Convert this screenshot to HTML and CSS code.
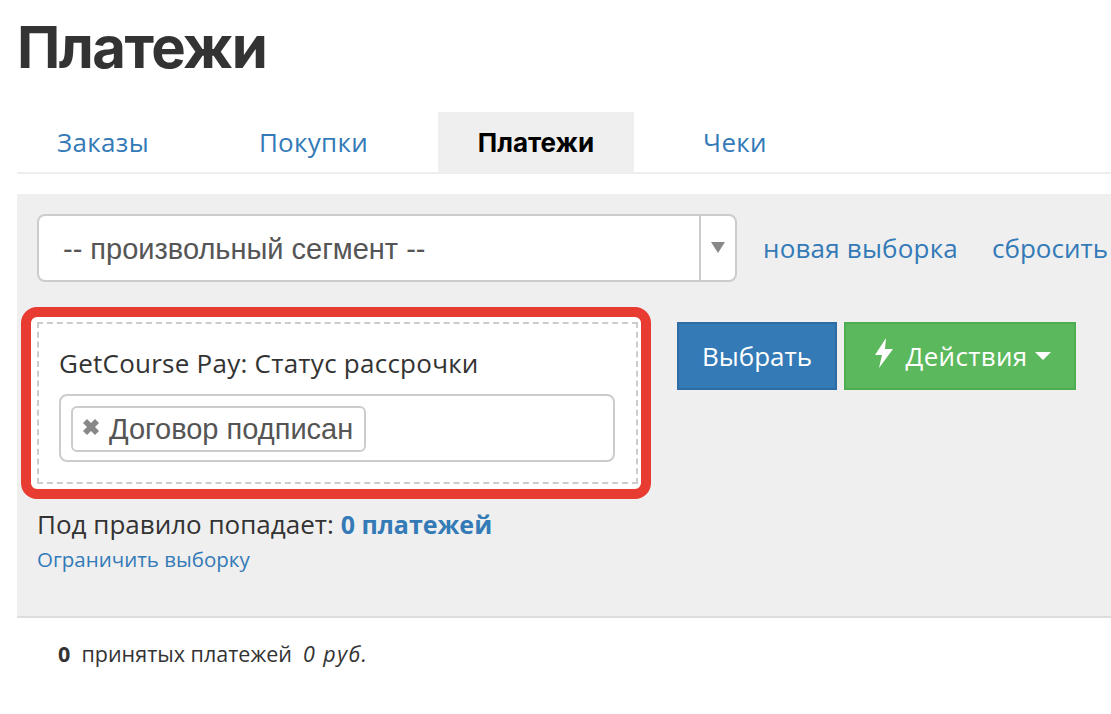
FILE: index.html
```html
<!DOCTYPE html>
<html lang="ru">
<head>
<meta charset="utf-8">
<title>Платежи</title>
<link rel="stylesheet" href="styles.css">
</head>
<body>
<main class="page">
  <h1 class="title">Платежи</h1>
  <nav class="tabs">
    <a class="tab tab-a">Заказы</a>
    <a class="tab tab-b">Покупки</a>
    <a class="tab tab-c active">Платежи</a>
    <a class="tab tab-d">Чеки</a>
  </nav>
  <section class="panel">
    <div class="segment-row">
      <div class="select">
        <span class="select-text">-- произвольный сегмент --</span>
        <span class="select-arrow"><i class="tri"></i></span>
      </div>
      <a class="link link-new">новая выборка</a>
      <a class="link link-reset">сбросить</a>
    </div>
    <div class="rule-row">
      <div class="highlight">
        <div class="rule">
          <div class="rule-label">GetCourse Pay: Статус рассрочки</div>
          <div class="tag-input">
            <span class="tag">
              <svg class="tag-x" viewBox="2 2 12 12"><path d="M2 5 5 2l3 3 3-3 3 3-3 3 3 3-3 3-3-3-3 3-3-3 3-3z"/></svg>
              Договор подписан
            </span>
          </div>
        </div>
      </div>
      <button class="btn btn-blue">Выбрать</button>
      <button class="btn btn-green">
        <svg class="bolt" viewBox="0 0 20 30"><path d="M12 0 1 17h7L5 30 19 11h-8z"/></svg>
        Действия
        <i class="caret"></i>
      </button>
    </div>
    <p class="count">Под правило попадает: <a class="count-link">0 платежей</a></p>
    <a class="limit">Ограничить выборку</a>
  </section>
  <p class="summary"><b>0</b>&nbsp; принятых платежей &nbsp;<em>0 руб.</em></p>
</main>
</body>
</html>
```
FILE: styles.css
```css
* { box-sizing: border-box; }
html, body { margin: 0; padding: 0; background: #fff; overflow: hidden; }
body { width: 1111px; height: 714px; font-family: "Open Sans", "Noto Sans", sans-serif; color: #333; }
.page { padding-left: 17px; }
.title { margin: 0; padding: 13px 0 0; height: 112px; font-size: 58px; line-height: 68px; font-weight: 700; color: #333; font-family: "Inter", "Noto Sans", sans-serif; letter-spacing: -1.5px; }
.tabs { display: flex; height: 62px; border-bottom: 2px solid #eee; }
.tab { display: flex; align-items: center; justify-content: center; height: 60px; font-size: 26px; letter-spacing: .3px; color: #337ab7; font-family: "Open Sans", sans-serif; }
.tab-a { width: 172px; }
.tab-b { width: 249px; }
.tab-c { width: 196px; }
.tab-d { width: 202px; }
.tab.active { background: #efefef; color: #000; font-weight: 700; font-size: 26px; letter-spacing: 0; font-family: "Inter", sans-serif; }
.panel { margin-top: 20px; height: 424px; padding: 20px 0 0 20px; background: #efefef; border-bottom: 2px solid #ddd; }
.segment-row { display: flex; align-items: center; height: 68px; }
.select { display: flex; flex: none; width: 700px; height: 68px; background: #fff; border: 2px solid #ccc; border-radius: 8px; }
.select-text { flex: 1; padding: 0 0 0 24px; line-height: 66px; font-size: 29px; color: #555; font-family: "Liberation Sans", sans-serif; }
.select-arrow { display: flex; justify-content: center; width: 36px; border-left: 2px solid #ccc; padding-top: 26px; }
.tri { width: 0; height: 0; border-left: 7px solid transparent; border-right: 7px solid transparent; border-top: 11px solid #888; }
.link { font-size: 26px; letter-spacing: .2px; color: #337ab7; white-space: nowrap; }
.link-new { margin-left: 26px; }
.link-reset { margin-left: 34px; letter-spacing: 0; }
.rule-row { display: flex; align-items: flex-start; margin-top: 25px; margin-left: -16px; height: 192px; }
.highlight { flex: none; width: 630px; height: 192px; border: 10px solid #e83c33; border-radius: 16px; background: #fff; padding: 5px 3px 5px 6px; }
.rule { width: 601px; height: 162px; padding: 23px 21px 0 20px; border: 2px dashed #ccc; background: #fff; }
.rule-label { font-size: 26px; letter-spacing: .25px; line-height: 32px; color: #333; white-space: nowrap; }
.tag-input { margin-top: 15px; height: 68px; padding: 10px; background: #fff; border: 2px solid #ccc; border-radius: 8px; }
.tag { display: inline-flex; align-items: center; height: 46px; padding: 0 11px 0 10px; border: 2px solid #ccc; border-radius: 6px; font-size: 29px; color: #555; font-family: "Liberation Sans", sans-serif; background: #fff; }
.tag-x { width: 16px; height: 16px; margin-right: 10px; margin-top: -4px; fill: #888; }
.btn { display: flex; align-items: center; justify-content: center; height: 68px; margin: 15px 0 0; border: 2px solid; font-size: 26px; color: #fff; font-family: "Open Sans", sans-serif; padding: 0; }
.btn-blue { width: 160px; margin-left: 26px; background: #337ab7; border-color: #2e6da4; }
.btn-green { width: 232px; margin-left: 7px; padding-left: 5px; background: #5cb85c; border-color: #4cae4c; letter-spacing: .3px; }
.bolt { width: 20px; height: 30px; margin-right: 12px; fill: #fff; margin-top: -6px; }
.caret { width: 0; height: 0; margin-left: 8px; border-left: 8px solid transparent; border-right: 8px solid transparent; border-top: 8px solid #fff; }
.count { margin: 7px 0 0; font-size: 26px; line-height: 36px; color: #333; }
.count-link { color: #337ab7; font-weight: 700; font-size: 25px; }
.limit { display: block; margin-top: 1px; font-size: 20.5px; line-height: 32px; color: #337ab7; }
.summary { margin: 21px 0 0 41px; font-size: 21.5px; line-height: 30px; color: #333; }
.summary em { font-style: italic; letter-spacing: 1.4px; }
```
